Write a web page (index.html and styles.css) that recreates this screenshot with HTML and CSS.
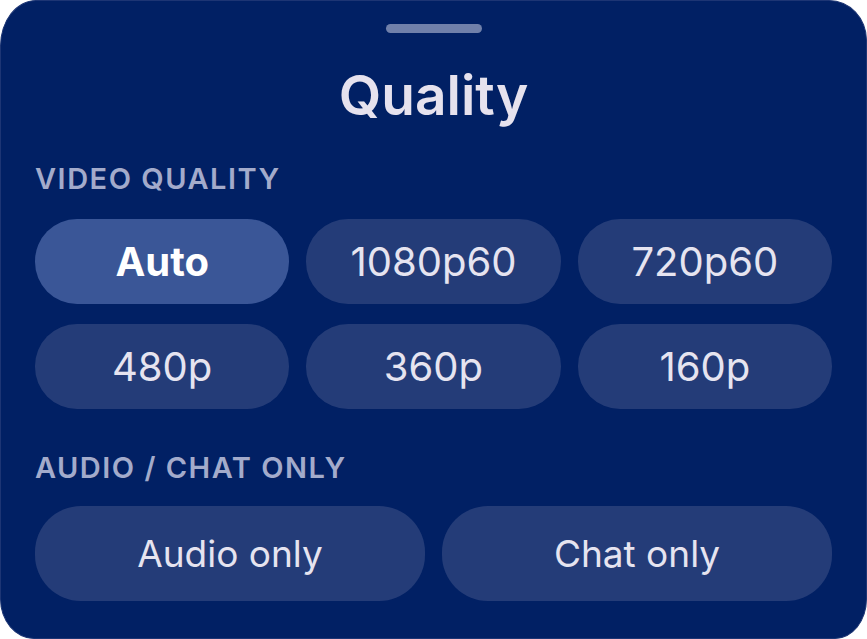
FILE: index.html
```html
<!DOCTYPE html>
<html lang="en">
<head>
<meta charset="utf-8">
<title>Quality</title>
<link rel="stylesheet" href="styles.css">
</head>
<body>
<div class="sheet">
  <div class="handle"></div>
  <h1 class="title">Quality</h1>
  <div class="section-label">VIDEO QUALITY</div>
  <div class="grid three">
    <button class="opt selected">Auto</button>
    <button class="opt">1080p60</button>
    <button class="opt">720p60</button>
    <button class="opt">480p</button>
    <button class="opt">360p</button>
    <button class="opt">160p</button>
  </div>
  <div class="section-label second">AUDIO / CHAT ONLY</div>
  <div class="grid two">
    <button class="opt tall">Audio only</button>
    <button class="opt tall">Chat only</button>
  </div>
</div>
</body>
</html>
```
FILE: styles.css
```css
html, body {
  margin: 0;
  padding: 0;
  background: #ffffff;
}
body {
  width: 867px;
  height: 639px;
  overflow: hidden;
  font-family: Inter, "Noto Sans", "DejaVu Sans", sans-serif;
}
.sheet {
  box-sizing: border-box;
  width: 867px;
  height: 639px;
  background: #012064;
  border: 1px solid #1d3574;
  border-radius: 36px 38px 32px 34px / 46px 40px 40px 40px;
  padding: 23px 34px 0 34px;
  display: flex;
  flex-direction: column;
}
.handle {
  align-self: center;
  width: 96px;
  height: 9px;
  border-radius: 5px;
  background: #7080aa;
}
.title {
  margin: 31px 0 0 0;
  font-size: 55px;
  line-height: 62px;
  font-weight: 600;
  text-align: center;
  color: #e6e2ee;
}
.section-label {
  margin-top: 37px;
  font-size: 29px;
  line-height: 32px;
  font-weight: 600;
  letter-spacing: 1.5px;
  color: #a3abcb;
}
.section-label.second {
  margin-top: 43px;
}
.grid {
  display: grid;
  column-gap: 17px;
  row-gap: 20px;
  margin-top: 24px;
}
.grid.three {
  grid-template-columns: repeat(3, 1fr);
}
.grid.two {
  grid-template-columns: repeat(2, 1fr);
  margin-top: 22px;
}
.opt {
  height: 85px;
  border: none;
  border-radius: 42px;
  background: #243c78;
  color: #e6e4f0;
  font-family: Inter, "Noto Sans", "DejaVu Sans", sans-serif;
  font-size: 40px;
  font-weight: 400;
  padding: 0;
}
.opt.selected {
  background: #3a5697;
  color: #ffffff;
  font-weight: 700;
}
.opt.tall {
  height: 95px;
  border-radius: 46px;
  font-size: 37px;
}
```
